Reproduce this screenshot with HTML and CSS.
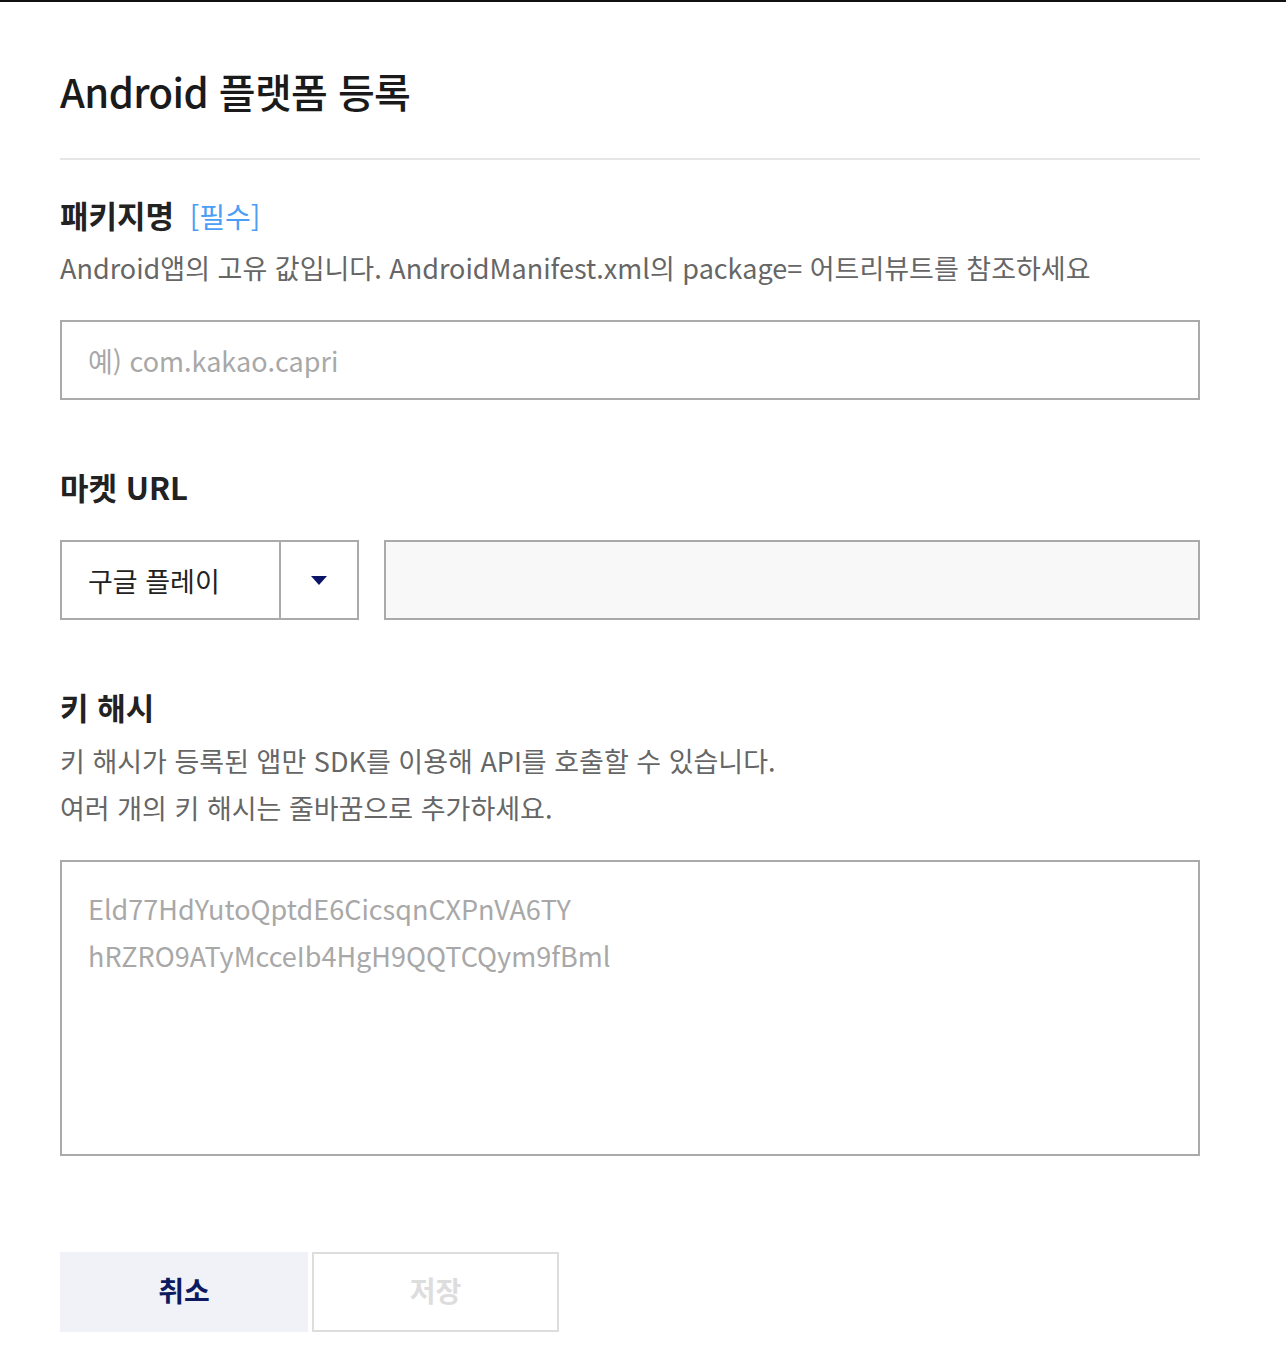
FILE: index.html
```html
<!DOCTYPE html>
<html lang="ko">
<head>
    <meta charset="UTF-8">
    <meta name="viewport" content="width=device-width, initial-scale=1.0">
    <title>Android 플랫폼 등록</title>
    <link rel="stylesheet" href="styles.css">
</head>
<body>
    <div class="modal">
        <h1 class="title">Android 플랫폼 등록</h1>
        <hr class="divider">

        <form id="platformForm">
            <div class="field">
                <label class="label" for="package">패키지명 <span class="required">[필수]</span></label>
                <p class="desc">Android앱의 고유 값입니다. AndroidManifest.xml의 package= 어트리뷰트를 참조하세요</p>
                <input class="text-input" type="text" id="package" name="package" placeholder="예) com.kakao.capri">
            </div>

            <div class="field market">
                <label class="label" for="marketUrl">마켓 URL</label>
                <div class="market-row">
                    <div class="select">
                        <span class="select-value">구글 플레이</span>
                        <span class="select-arrow"><i class="caret"></i></span>
                    </div>
                    <input class="text-input url-input" type="text" id="marketUrl" name="marketUrl">
                </div>
            </div>

            <div class="field keyhash">
                <label class="label" for="keyHash">키 해시</label>
                <p class="desc">키 해시가 등록된 앱만 SDK를 이용해 API를 호출할 수 있습니다.<br>여러 개의 키 해시는 줄바꿈으로 추가하세요.</p>
                <textarea class="text-area" id="keyHash" name="keyHash" placeholder="Eld77HdYutoQptdE6CicsqnCXPnVA6TY&#10;hRZRO9ATyMcceIb4HgH9QQTCQym9fBml"></textarea>
            </div>

            <div class="actions">
                <button type="button" class="btn btn-cancel">취소</button>
                <button type="submit" class="btn btn-save" disabled>저장</button>
            </div>
        </form>
    </div>
</body>
</html>
```

FILE: styles.css
```css
body {
    margin: 0;
    padding: 0;
    background-color: #fff;
    font-family: "Noto Sans CJK KR", "Noto Sans", sans-serif;
    color: #222;
}
.modal {
    border-top: 2px solid #111;
    padding: 59px 86px 40px 60px;
}
.title {
    margin: 0;
    font-size: 40px;
    line-height: 60px;
    font-weight: 500;
    color: #1a1a1a;
    letter-spacing: -0.6px;
}
.divider {
    margin: 37px 0 0;
    border: none;
    height: 2px;
    background-color: #e6e6e6;
}
.field {
    margin-top: 35px;
}
.field.market,
.field.keyhash {
    margin-top: 67px;
}
.label {
    display: block;
    font-size: 31px;
    line-height: 40px;
    font-weight: 700;
    color: #222;
}
.required {
    margin-left: 7px;
    font-size: 28px;
    font-weight: 400;
    color: #4a9ef5;
}
.desc {
    margin: 8px 0 0;
    font-size: 27px;
    line-height: 47px;
    color: #666;
}
.keyhash .desc {
    margin-top: 10px;
}
.text-input,
.text-area {
    display: block;
    box-sizing: border-box;
    width: 100%;
    margin-top: 29px;
    border: 2px solid #aaa;
    border-radius: 0;
    font-family: inherit;
    font-size: 27px;
    color: #222;
    outline: none;
}
.text-input {
    height: 80px;
    padding: 0 26px;
}
.text-input::placeholder,
.text-area::placeholder {
    color: #a8a8a8;
}
.market-row {
    display: flex;
    gap: 25px;
    margin-top: 33px;
}
.select {
    display: flex;
    box-sizing: border-box;
    width: 299px;
    height: 80px;
    border: 2px solid #aaa;
}
.select-value {
    flex: 1;
    display: flex;
    align-items: center;
    padding-left: 26px;
    font-size: 27px;
    color: #222;
    border-right: 2px solid #aaa;
}
.select-arrow {
    width: 76px;
    display: flex;
    align-items: center;
    justify-content: center;
}
.caret {
    width: 0;
    height: 0;
    border-left: 8px solid transparent;
    border-right: 8px solid transparent;
    border-top: 9px solid #0b1466;
}
.url-input {
    flex: 1;
    margin-top: 0;
    background-color: #f7f8f7;
}
.text-area {
    height: 296px;
    padding: 23px 26px;
    line-height: 47px;
    resize: none;
}
.actions {
    display: flex;
    gap: 4px;
    margin-top: 96px;
}
.btn {
    box-sizing: border-box;
    width: 248px;
    height: 80px;
    padding: 0 0 5px;
    font-family: inherit;
    font-size: 28px;
    font-weight: 700;
    border-radius: 0;
    cursor: pointer;
}
.btn-cancel {
    background-color: #f1f2f8;
    color: #0d1a60;
    border: none;
}
.btn-save {
    width: 247px;
    background-color: #fff;
    color: #ddd;
    border: 2px solid #ddd;
    cursor: default;
}
```
